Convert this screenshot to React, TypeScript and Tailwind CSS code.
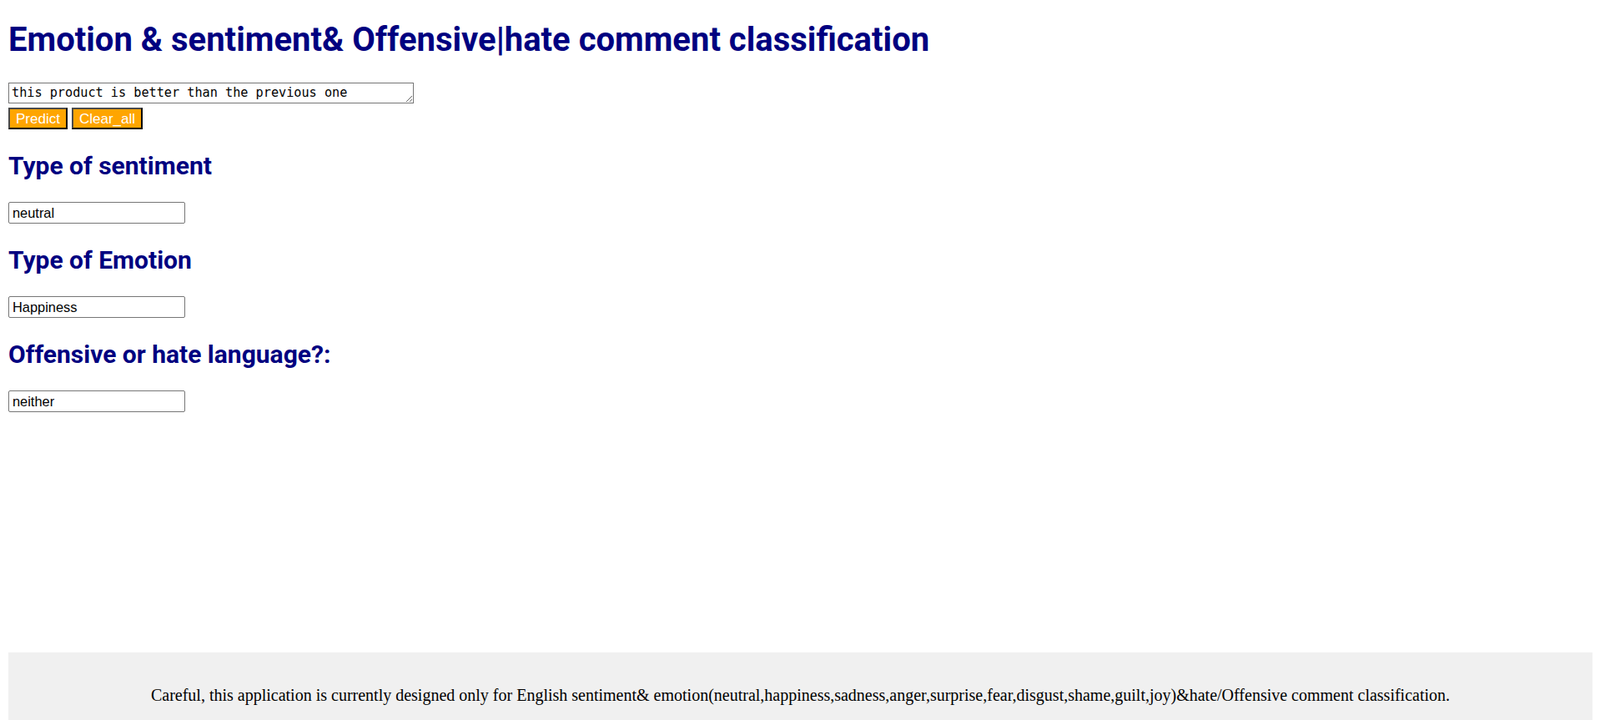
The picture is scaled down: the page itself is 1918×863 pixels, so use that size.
import React, { useState } from "react";

const ResultField = ({ label, value }: { label: string; value: string }) => (
  <div>
    <h2 className="mt-[29px] font-['Roboto',sans-serif] text-[30px] font-bold leading-[30px] text-[#000080]">
      {label}
    </h2>
    <input
      readOnly
      value={value}
      className="mt-[28px] box-border block h-[26px] w-[212px] rounded-[2px] border border-[#767676] bg-white px-[4px] font-['Liberation_Sans',Arial,sans-serif] text-[16.4px] text-black outline-none"
    />
  </div>
);

const App = () => {
  const [text, setText] = useState("this product is better than the previous one");

  return (
    <div className="flex min-h-screen flex-col bg-white pl-[10px] pr-[9px]">
      <main>
        <h1 className="mt-[28px] font-['Roboto',sans-serif] text-[40px] font-bold leading-[40px] text-[#000080]">
          Emotion &amp; sentiment&amp; Offensive|hate comment classification
        </h1>

        <textarea
          value={text}
          onChange={(e) => setText(e.target.value)}
          className="mt-[31px] box-border block h-[25px] w-[486px] overflow-hidden border border-[#767676] bg-white px-[3px] pt-[2px] font-['DejaVu_Sans_Mono',monospace] text-[15.2px] leading-[18px] text-black outline-none"
        />

        <div className="mt-[5px] flex gap-[5px]">
          <button className="box-border h-[26px] border-2 border-t-[#4a4a4a] border-l-[#4a4a4a] border-b-black border-r-black bg-[#ffa500] px-[7px] font-['Liberation_Sans',Arial,sans-serif] text-[17px] leading-[19px] text-white">
            Predict
          </button>
          <button
            onClick={() => setText("")}
            className="box-border h-[26px] border-2 border-t-[#4a4a4a] border-l-[#4a4a4a] border-b-black border-r-black bg-[#ffa500] px-[7px] font-['Liberation_Sans',Arial,sans-serif] text-[17px] leading-[19px] text-white"
          >
            Clear_all
          </button>
        </div>

        <ResultField label="Type of sentiment" value="neutral" />
        <ResultField label="Type of Emotion" value="Happiness" />
        <ResultField label="Offensive or hate language?:" value="neither" />
      </main>

      {/* footer sits at the bottom of the window */}
      <footer className="mt-auto h-[81px] bg-[#f0f0f0] pt-[40px] text-center font-['Liberation_Serif','Times_New_Roman',serif] text-[20px] leading-[23px] text-black">
        Careful, this application is currently designed only for English sentiment&amp; emotion(neutral,happiness,sadness,anger,surprise,fear,disgust,shame,guilt,joy)&amp;hate/Offensive comment classification.
      </footer>
    </div>
  );
};

export default App;
